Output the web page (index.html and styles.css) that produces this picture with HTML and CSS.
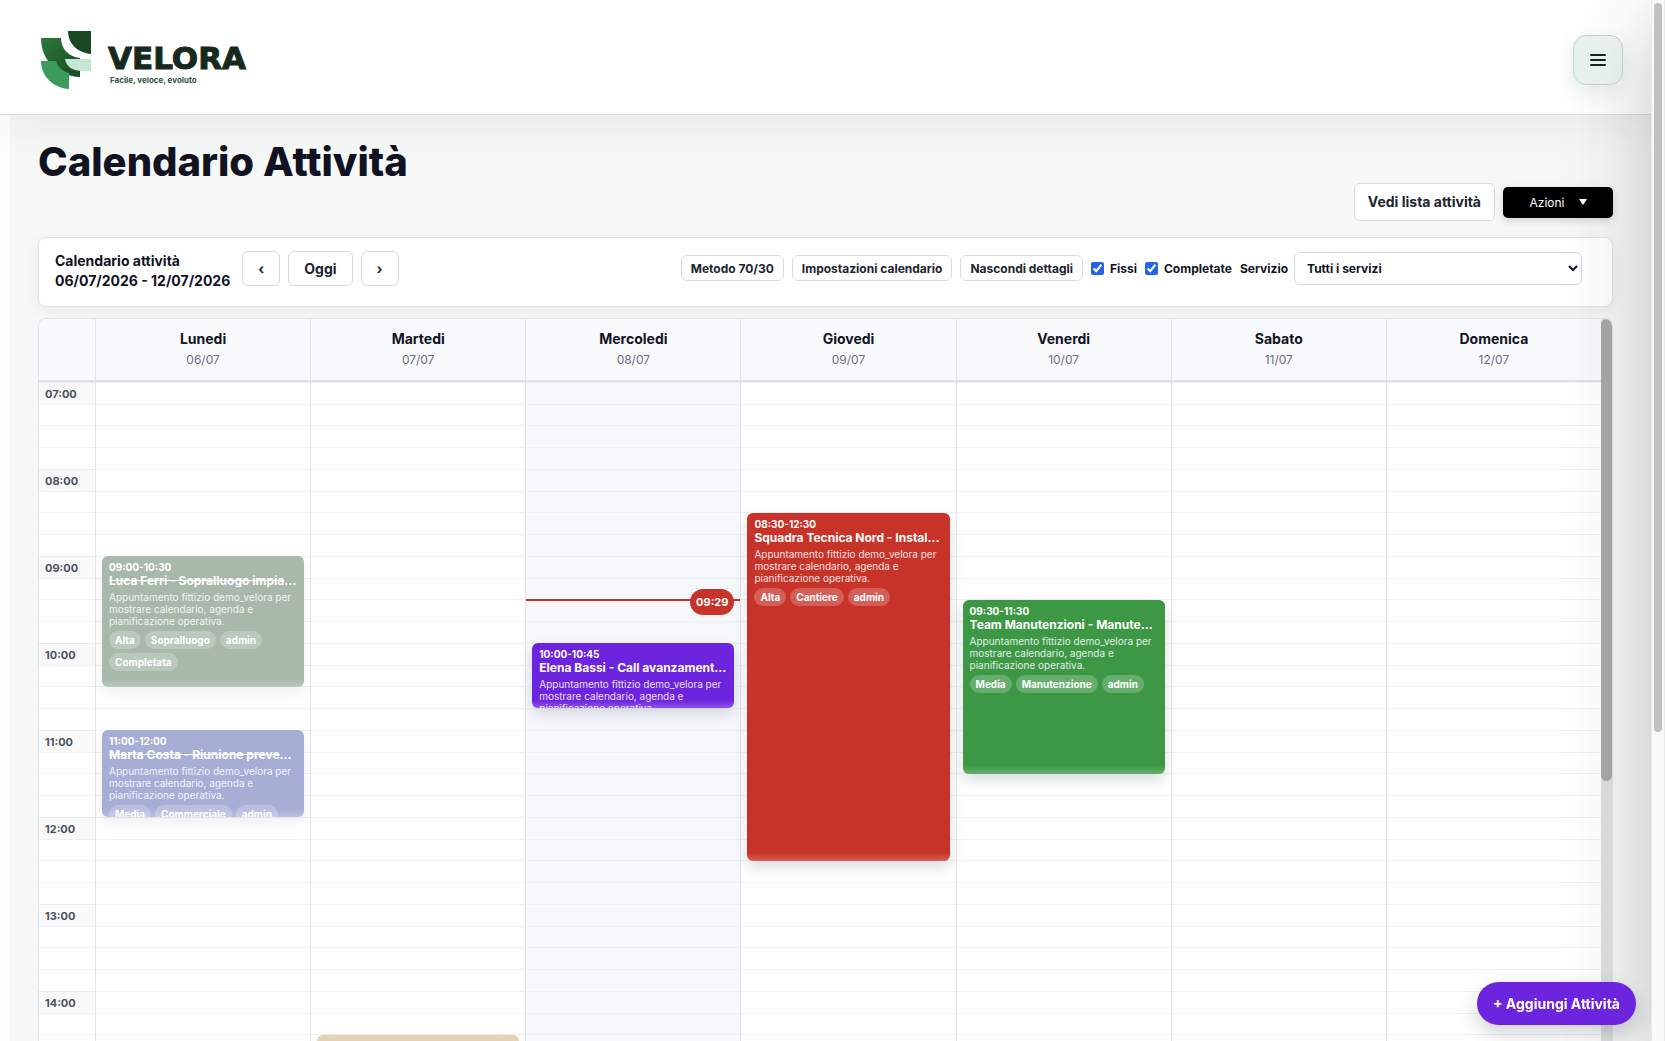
FILE: index.html
```html
<!DOCTYPE html>
<html lang="it">
<head>
    <meta charset="UTF-8">
    <meta name="viewport" content="width=device-width, initial-scale=1.0">
    <title>Velora - Calendario Attività</title>
    <link rel="stylesheet" href="styles.css">
</head>
<body>
    <div class="app">
        <header class="topbar">
            <a class="brand" href="#">
                <svg class="brand-mark" width="52" height="60" viewBox="0 0 52 60" aria-hidden="true">
                    <defs>
                        <linearGradient id="leaf" x1="0" y1="0" x2="1" y2="1">
                            <stop offset="0" stop-color="#2b7a37"/>
                            <stop offset="1" stop-color="#174a25"/>
                        </linearGradient>
                    </defs>
                    <path d="M1 8H21C21 18 28 27 40 28V47C18 46 1 31 1 8Z" fill="url(#leaf)"/>
                    <path d="M28 1H51V24C38 23 28 14 28 1Z" fill="#1b4824"/>
                    <path d="M25 29H51V41H42C32 41 26 36 25 29Z" fill="#c5e6d4"/>
                    <path d="M1 31H16C18 37 22 41 29 43V59C13 58 1 46 1 31Z" fill="#3a9b5c"/>
                </svg>
                <span class="brand-text">
                    <strong>VELORA</strong>
                    <small>Facile, veloce, evoluto</small>
                </span>
            </a>
            <button class="menu-btn" type="button" aria-label="Menu">
                <svg width="16" height="14" viewBox="0 0 16 14" fill="none" stroke="#14251c" stroke-width="2" stroke-linecap="round">
                    <path d="M1 2H15M1 7H15M1 12H15"/>
                </svg>
            </button>
        </header>

        <main>
            <h1>Calendario Attività</h1>

            <div class="page-actions">
                <a class="btn btn-list" href="#">Vedi lista attività</a>
                <button class="btn-dark" type="button">
                    Azioni
                    <svg width="8" height="6" viewBox="0 0 8 6" fill="#fff"><path d="M0 0H8L4 6Z"/></svg>
                </button>
            </div>

            <section class="toolbar">
                <div class="period">
                    Calendario attività<br>
                    06/07/2026 - 12/07/2026
                </div>
                <nav class="week-nav">
                    <button class="btn" type="button" aria-label="Settimana precedente">‹</button>
                    <button class="btn" type="button">Oggi</button>
                    <button class="btn" type="button" aria-label="Settimana successiva">›</button>
                </nav>
                <div class="filters">
                    <button class="btn btn-sm" type="button">Metodo 70/30</button>
                    <button class="btn btn-sm" type="button">Impostazioni calendario</button>
                    <button class="btn btn-sm" type="button">Nascondi dettagli</button>
                    <label><input type="checkbox" checked>Fissi</label>
                    <label><input type="checkbox" checked>Completate</label>
                    <label>Servizio
                        <select>
                            <option>Tutti i servizi</option>
                        </select>
                    </label>
                </div>
            </section>

            <section class="calendar">
                <div class="week">
                    <div class="week-head">
                        <div></div>
                        <div><strong>Lunedi</strong><span>06/07</span></div>
                        <div><strong>Martedi</strong><span>07/07</span></div>
                        <div><strong>Mercoledi</strong><span>08/07</span></div>
                        <div><strong>Giovedi</strong><span>09/07</span></div>
                        <div><strong>Venerdi</strong><span>10/07</span></div>
                        <div><strong>Sabato</strong><span>11/07</span></div>
                        <div><strong>Domenica</strong><span>12/07</span></div>
                    </div>

                    <div class="week-body">
                        <div class="hours slots">
                            <time>07:00</time>
                            <time>08:00</time>
                            <time>09:00</time>
                            <time>10:00</time>
                            <time>11:00</time>
                            <time>12:00</time>
                            <time>13:00</time>
                            <time>14:00</time>
                        </div>

                        <!-- --start: ore dopo le 07:00, --len: durata in ore -->
                        <div class="day slots">
                            <article class="event sage done" style="--start: 2; --len: 1.5">
                                <time>09:00-10:30</time>
                                <h3>Luca Ferri - Sopralluogo impianto</h3>
                                <p>Appuntamento fittizio demo_velora per mostrare calendario, agenda e pianificazione operativa.</p>
                                <div class="tags"><span>Alta</span><span>Sopralluogo</span><span>admin</span><span>Completata</span></div>
                            </article>
                            <article class="event indigo done" style="--start: 4; --len: 1">
                                <time>11:00-12:00</time>
                                <h3>Marta Costa - Riunione preventivo</h3>
                                <p>Appuntamento fittizio demo_velora per mostrare calendario, agenda e pianificazione operativa.</p>
                                <div class="tags"><span>Media</span><span>Commerciale</span><span>admin</span></div>
                            </article>
                        </div>

                        <div class="day slots">
                            <article class="event sand" style="--start: 7.5; --len: 1"></article>
                        </div>

                        <div class="day slots today">
                            <div class="now" style="--start: 2.49"><span>09:29</span></div>
                            <article class="event violet" style="--start: 3; --len: 0.75">
                                <time>10:00-10:45</time>
                                <h3>Elena Bassi - Call avanzamento lavori</h3>
                                <p>Appuntamento fittizio demo_velora per mostrare calendario, agenda e pianificazione operativa.</p>
                            </article>
                        </div>

                        <div class="day slots">
                            <article class="event red" style="--start: 1.5; --len: 4">
                                <time>08:30-12:30</time>
                                <h3>Squadra Tecnica Nord - Installazione</h3>
                                <p>Appuntamento fittizio demo_velora per mostrare calendario, agenda e pianificazione operativa.</p>
                                <div class="tags"><span>Alta</span><span>Cantiere</span><span>admin</span></div>
                            </article>
                        </div>

                        <div class="day slots">
                            <article class="event green" style="--start: 2.5; --len: 2">
                                <time>09:30-11:30</time>
                                <h3>Team Manutenzioni - Manutenzione</h3>
                                <p>Appuntamento fittizio demo_velora per mostrare calendario, agenda e pianificazione operativa.</p>
                                <div class="tags"><span>Media</span><span>Manutenzione</span><span>admin</span></div>
                            </article>
                        </div>

                        <div class="day slots"></div>
                        <div class="day slots"></div>
                    </div>
                </div>
                <div class="calendar-scroll"></div>
            </section>
        </main>

        <aside class="drawer"></aside>
    </div>

    <div class="page-scroll"></div>

    <button class="fab" type="button">+ Aggiungi Attività</button>
</body>
</html>
```

FILE: styles.css
```css
:root {
    --hour: 87px;
    --line: #e2e5ea;
    --ink: #111322;
}

* {
    box-sizing: border-box;
}

body {
    margin: 0;
    height: 100vh;
    display: flex;
    overflow: hidden;
    font-family: Inter, "Liberation Sans", sans-serif;
    color: var(--ink);
    background: #fcfefd;
}

button, select, input {
    font: inherit;
    color: inherit;
}

.app {
    position: relative;
    flex: 1;
    min-width: 0;
    display: flex;
    flex-direction: column;
    overflow: hidden;
}

/* Header */
.topbar {
    position: relative;
    z-index: 2;
    flex: none;
    height: 115px;
    padding: 6px 28px 0 40px;
    display: flex;
    align-items: center;
    justify-content: space-between;
    background: #fff;
    border-bottom: 1px solid #d5dddb;
    box-shadow: 0 12px 40px rgba(20, 40, 35, 0.06);
}

.brand {
    display: flex;
    align-items: center;
    gap: 16px;
    color: #16291d;
    text-decoration: none;
}

.brand-text {
    display: flex;
    flex-direction: column;
    padding-top: 6px;

    strong {
        font-family: "DejaVu Sans", sans-serif;
        font-size: 31px;
        font-weight: 700;
        line-height: 34px;
        -webkit-text-stroke: 1px #16291d;
    }

    small {
        padding-left: 2px;
        font-size: 8px;
        font-weight: 700;
        line-height: 10px;
        color: #2f5540;
    }
}

.menu-btn {
    width: 50px;
    height: 50px;
    padding: 0;
    display: grid;
    place-content: center;
    border: 1px solid #c3d6cc;
    border-radius: 13px;
    background: linear-gradient(90deg, #e6f3ec, #f2f7f4);
    box-shadow: 0 8px 20px rgba(20, 50, 35, 0.09);
}

/* Page */
main {
    flex: 1;
    min-height: 0;
    margin-left: 10px;
    padding: 21px 38px 0 28px;
    display: flex;
    flex-direction: column;
    background: #f6f8f7;
}

h1 {
    margin: 0;
    font-size: 40px;
    line-height: 52px;
    font-weight: 800;
}

.page-actions {
    display: flex;
    justify-content: flex-end;
    align-items: center;
    gap: 8px;
    margin: -5px 0 16px;
}

.btn {
    height: 35px;
    padding: 0 15px;
    border: 1px solid #d7dade;
    border-radius: 6px;
    background: #fff;
    color: #20242e;
    font-size: 14px;
    font-weight: 700;
}

.btn-list {
    height: 38px;
    padding: 0 13px;
    line-height: 36px;
    text-decoration: none;
}

.btn-sm {
    height: 26px;
    padding: 0 9px;
    font-size: 12px;
}

.btn-dark {
    width: 110px;
    height: 31px;
    display: flex;
    align-items: center;
    justify-content: center;
    gap: 14px;
    border: 0;
    border-radius: 5px;
    background: #000;
    color: #fff;
    font-size: 12px;
    box-shadow: 0 3px 8px rgba(0, 0, 0, 0.15);
}

.toolbar {
    flex: none;
    height: 70px;
    padding: 0 30px 8px 16px;
    display: flex;
    align-items: center;
    gap: 12px;
    background: #fff;
    border: 1px solid #dfe3e5;
    border-radius: 8px;
    box-shadow: 0 4px 16px rgba(20, 40, 35, 0.06);
}

.period {
    padding-top: 6px;
    font-size: 14px;
    line-height: 20px;
    font-weight: 700;
}

.week-nav {
    display: flex;
    gap: 8px;
}

.filters {
    margin-left: auto;
    display: flex;
    align-items: center;
    gap: 8px;
    font-size: 12px;
    font-weight: 700;

    label {
        display: flex;
        align-items: center;
        gap: 6px;
    }

    input {
        width: 13px;
        height: 13px;
        margin: 0;
        accent-color: #2563eb;
    }

    select {
        width: 288px;
        height: 33px;
        padding: 0 8px;
        border: 1px solid #d7dade;
        border-radius: 6px;
        background: #fff;
    }
}

/* Calendar */
.calendar {
    flex: 1;
    min-height: 0;
    margin-top: 11px;
    display: flex;
    overflow: hidden;
    border: 1px solid var(--line);
    border-bottom: 0;
    border-radius: 8px 8px 0 0;
    background: #fff;
}

.week {
    flex: 1;
}

.week-head, .week-body {
    display: grid;
    grid-template-columns: 56px repeat(7, 1fr);

    > div + div {
        border-left: 1px solid var(--line);
    }
}

.week-head {
    height: 63px;
    background: #f8f9fb;
    border-bottom: 2px solid #dfe2e6;
    text-align: center;

    strong, span {
        display: block;
        font-size: 14px;
        font-weight: 700;
        line-height: 20px;
    }

    strong {
        margin-top: 10px;
    }

    span {
        font-size: 12px;
        font-weight: 400;
        line-height: 22px;
        color: #6b7080;
    }
}

/* four quarter-hour lines for each hour */
.slots {
    position: relative;
    height: calc(var(--hour) * 8);
    background-image:
        linear-gradient(#eff0f2 1px, transparent 1px),
        linear-gradient(#eff0f2 1px, transparent 1px),
        linear-gradient(#eff0f2 1px, transparent 1px),
        linear-gradient(#eff0f2 1px, transparent 1px);
    background-size: 100% var(--hour);
    background-position: 0 0, 0 22px, 0 43px, 0 65px;
}

.hours time {
    display: block;
    height: var(--hour);
    padding-left: 6px;
    font-size: 11px;
    font-weight: 700;
    line-height: 24px;
    color: #4b5160;
    background: linear-gradient(rgba(0, 0, 0, 0.025) 22px, transparent 22px);
}

.today {
    background-color: #f7f8fe;
}

.event {
    position: absolute;
    top: calc(var(--start) * var(--hour));
    left: 6px;
    right: 6px;
    height: calc(var(--len) * var(--hour));
    padding: 5px 7px;
    overflow: hidden;
    border-radius: 6px;
    color: #fff;
    box-shadow: 0 6px 14px rgba(15, 23, 42, 0.15);

    /* resize handle */
    &::after {
        content: "";
        position: absolute;
        left: 0;
        right: 0;
        bottom: 0;
        height: 8px;
        background: linear-gradient(transparent, rgba(255, 255, 255, 0.22));
    }

    time {
        display: block;
        font-size: 10px;
        font-weight: 700;
        line-height: 12px;
    }

    h3 {
        margin: 0;
        font-size: 12px;
        font-weight: 700;
        line-height: 16px;
        white-space: nowrap;
        overflow: hidden;
        text-overflow: ellipsis;
    }

    p {
        margin: 2px 0 4px;
        font-size: 10px;
        line-height: 12px;
        opacity: 0.85;
    }
}

.tags {
    display: flex;
    flex-wrap: wrap;
    gap: 4px;

    span {
        padding: 0 6px;
        border-radius: 9px;
        background: rgba(255, 255, 255, 0.22);
        font-size: 10px;
        font-weight: 700;
        line-height: 18px;
    }
}

.done {
    box-shadow: 0 6px 14px rgba(15, 23, 42, 0.07);

    h3 {
        text-decoration: line-through;
    }
}

.sage { background: #a8b9ac; }
.indigo { background: #a7aed5; }
.sand { background: #e5d2b5; }
.violet { background: #6d24df; }
.red { background: #c73329; }
.green { background: #3d9846; }

.now {
    position: absolute;
    top: calc(var(--start) * var(--hour));
    left: 0;
    right: 0;
    height: 2px;
    background: #c73329;

    span {
        position: absolute;
        top: -10px;
        right: 6px;
        padding: 0 6px;
        border-radius: 13px;
        background: #c73329;
        color: #fff;
        font-size: 11px;
        font-weight: 700;
        line-height: 26px;
    }
}

/* Scrollbars */
.calendar-scroll {
    width: 11px;
    background: #e0e2e1;

    &::before {
        content: "";
        display: block;
        height: 462px;
        border-radius: 6px;
        background: #a8aaa9;
    }
}

.page-scroll {
    width: 14px;
    padding: 3px 2px;
    background: #fafafa;
    border-left: 1px solid #e8e8e8;
    border-right: 1px solid #e8e8e8;

    &::before {
        content: "";
        display: block;
        width: 8px;
        height: 70vh;
        border-radius: 4px;
        background: #c1c1c1;
    }
}

/* closed side menu, only its shadow reaches the page */
.drawer {
    position: absolute;
    z-index: 3;
    top: 0;
    left: 100%;
    width: 320px;
    height: 100%;
    box-shadow: 0 24px 80px rgba(15, 40, 30, 0.26);
}

.fab {
    position: fixed;
    z-index: 4;
    right: 29px;
    bottom: 16px;
    height: 43px;
    padding: 0 16px;
    border: 0;
    border-radius: 22px;
    background: #6d24df;
    color: #fff;
    font-size: 14px;
    font-weight: 700;
    box-shadow: 0 8px 20px rgba(15, 23, 42, 0.2);
}
```
